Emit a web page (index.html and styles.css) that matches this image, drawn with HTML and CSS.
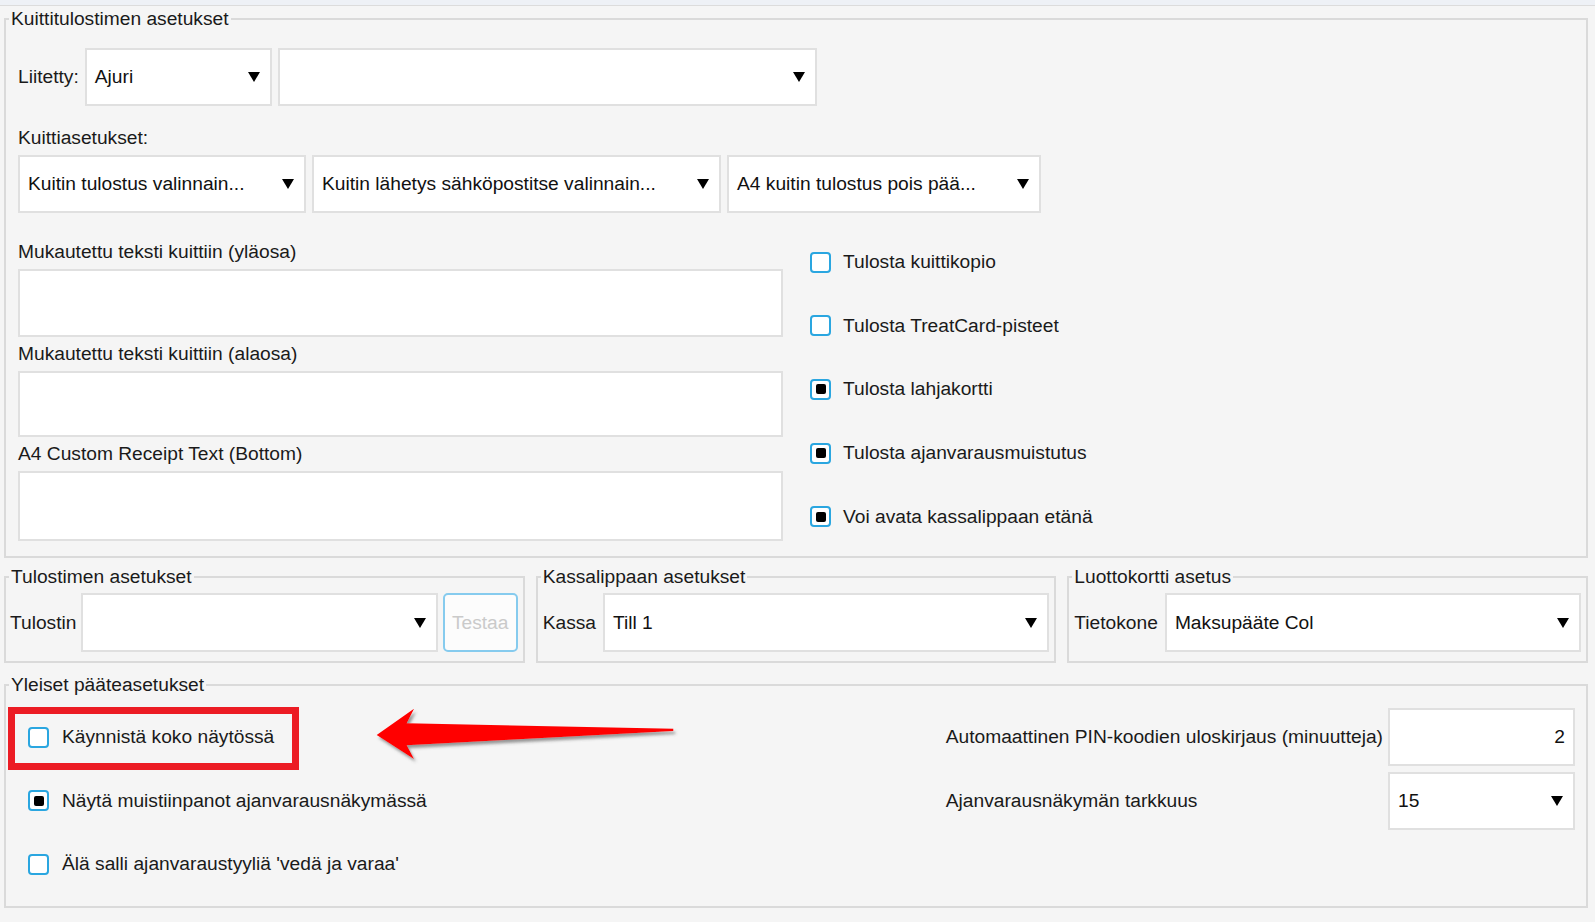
FILE: index.html
```html
<!DOCTYPE html>
<html lang="fi">
<head>
<meta charset="utf-8">
<title>Asetukset</title>
<link rel="stylesheet" href="styles.css">
</head>
<body>
<div class="topbar"></div>
<div class="page">
  <fieldset class="group">
    <legend>Kuittitulostimen asetukset</legend>
    <div class="fs1-body">
      <div class="row-attach">
        <span class="lbl">Liitetty:</span>
        <div class="select w-ajuri"><span>Ajuri</span><i class="arrow"></i></div>
        <div class="select w-driver"><span></span><i class="arrow"></i></div>
      </div>
      <div class="lbl sec">Kuittiasetukset:</div>
      <div class="row-opts">
        <div class="select w-o1"><span>Kuitin tulostus valinnain...</span><i class="arrow"></i></div>
        <div class="select w-o2"><span>Kuitin lähetys sähköpostitse valinnain...</span><i class="arrow"></i></div>
        <div class="select w-o3"><span>A4 kuitin tulostus pois pää...</span><i class="arrow"></i></div>
      </div>
      <div class="cols">
        <div class="texts">
          <div class="lbl">Mukautettu teksti kuittiin (yläosa)</div>
          <div class="ta ta1"></div>
          <div class="lbl after">Mukautettu teksti kuittiin (alaosa)</div>
          <div class="ta ta2"></div>
          <div class="lbl after">A4 Custom Receipt Text (Bottom)</div>
          <div class="ta ta3"></div>
        </div>
        <div class="checks">
          <div class="check"><span class="cb"></span><span>Tulosta kuittikopio</span></div>
          <div class="check"><span class="cb"></span><span>Tulosta TreatCard-pisteet</span></div>
          <div class="check"><span class="cb on"></span><span>Tulosta lahjakortti</span></div>
          <div class="check"><span class="cb on"></span><span>Tulosta ajanvarausmuistutus</span></div>
          <div class="check"><span class="cb on"></span><span>Voi avata kassalippaan etänä</span></div>
        </div>
      </div>
    </div>
  </fieldset>

  <div class="row2">
    <fieldset class="group">
      <legend>Tulostimen asetukset</legend>
      <div class="fs2-body tight">
        <span class="lbl">Tulostin</span>
        <div class="select grow h59"><span></span><i class="arrow"></i></div>
        <div class="btn">Testaa</div>
      </div>
    </fieldset>
    <fieldset class="group">
      <legend>Kassalippaan asetukset</legend>
      <div class="fs2-body">
        <span class="lbl">Kassa</span>
        <div class="select grow h59"><span>Till 1</span><i class="arrow"></i></div>
      </div>
    </fieldset>
    <fieldset class="group">
      <legend>Luottokortti asetus</legend>
      <div class="fs2-body">
        <span class="lbl">Tietokone</span>
        <div class="select grow h59"><span>Maksupääte Col</span><i class="arrow"></i></div>
      </div>
    </fieldset>
  </div>

  <fieldset class="group general">
    <legend>Yleiset pääteasetukset</legend>
    <div class="fs3-body">
      <div class="check gen r1 c1">
        <span class="cb"></span><span>Käynnistä koko näytössä</span>
        <div class="highlight"></div>
        <svg class="pointer" width="310" height="66" viewBox="0 0 310 66">
          <defs>
            <filter id="sh" x="-10%" y="-30%" width="120%" height="160%">
              <feDropShadow dx="2" dy="3" stdDeviation="1.5" flood-color="#555" flood-opacity="0.6"/>
            </filter>
          </defs>
          <polygon filter="url(#sh)" fill="#ff0000" points="6.7,34 44,7.7 36.7,22.3 303.3,27.7 303.3,30 36.7,44.3 44,58"/>
        </svg>
      </div>
      <div class="check gen r2 c1"><span class="cb on"></span><span>Näytä muistiinpanot ajanvarausnäkymässä</span></div>
      <div class="check gen r3 c1"><span class="cb"></span><span>Älä salli ajanvaraustyyliä 'vedä ja varaa'</span></div>
      <span class="lbl r1 c2 mid">Automaattinen PIN-koodien uloskirjaus (minuutteja)</span>
      <div class="input r1 c3">2</div>
      <span class="lbl r2 c2 mid">Ajanvarausnäkymän tarkkuus</span>
      <div class="select r2 c3 h58"><span>15</span><i class="arrow"></i></div>
    </div>
  </fieldset>
</div>
</body>
</html>
```

FILE: styles.css
```css
* { box-sizing: border-box; }

body {
  margin: 0;
  width: 1595px;
  height: 922px;
  overflow: hidden;
  background: #f5f5f5;
  font-family: "Liberation Sans", Arial, sans-serif;
  font-size: 19.2px;
  color: #1a1a1a;
}

.topbar {
  height: 6px;
  background: #eef1f6;
  border-bottom: 1px solid #dcdcdc;
}

.page {
  padding: 2px 7px 0 4px;
}

fieldset.group {
  margin: 0;
  padding: 0;
  min-width: 0;
  border: 2px solid #dadada;
  position: relative;
}

legend {
  margin-left: 3px;
  padding: 0 2px;
  height: 22px;
  line-height: 22px;
  color: #1a1a1a;
}

.lbl {
  line-height: 22px;
  white-space: nowrap;
}

/* Receipt printer group */
.fs1-body {
  padding: 18px 12px 15px 12px;
}

.row-attach {
  display: flex;
  align-items: center;
  gap: 6px;
  height: 58px;
}

.select {
  display: flex;
  align-items: center;
  justify-content: space-between;
  background: #fff;
  border: 2px solid #e0e0e0;
  padding: 0 10px 0 8px;
  height: 58px;
  color: #111;
  white-space: nowrap;
}

.arrow {
  flex: none;
  width: 0;
  height: 0;
  border-left: 6.5px solid transparent;
  border-right: 6.5px solid transparent;
  border-top: 10px solid #000;
}

.w-ajuri { width: 187px; }
.w-driver { width: 539px; }

.sec {
  margin-top: 20.5px;
  height: 22px;
}

.row-opts {
  display: flex;
  gap: 6px;
  margin-top: 6.5px;
}

.w-o1 { width: 288px; }
.w-o2 { width: 409px; }
.w-o3 { width: 314px; }

.cols {
  display: flex;
  margin-top: 28px;
}

.texts {
  width: 765px;
  flex: none;
}

.texts .lbl { height: 22px; }
.texts .lbl.after { margin-top: 6px; }

.ta {
  background: #fff;
  border: 2px solid #e0e0e0;
}

.ta1 { height: 68px; margin-top: 6px; }
.ta2 { height: 66px; margin-top: 6px; }
.ta3 { height: 70px; margin-top: 6px; }

.checks {
  margin-left: 27px;
  padding-top: 10px;
  display: flex;
  flex-direction: column;
  gap: 41.7px;
}

.check {
  display: flex;
  align-items: center;
  gap: 12px;
  height: 22px;
  white-space: nowrap;
}

.cb {
  flex: none;
  width: 21px;
  height: 21px;
  border: 2px solid #2aa6e0;
  border-radius: 4px;
  background: #fff;
  display: flex;
  align-items: center;
  justify-content: center;
}

.cb.on::after {
  content: "";
  width: 10px;
  height: 10px;
  background: #000;
  border-radius: 2px;
}

/* Second row of groups */
.row2 {
  display: grid;
  grid-template-columns: repeat(3, 1fr);
  gap: 11px;
  margin-top: 8px;
}

.fs2-body {
  display: flex;
  align-items: center;
  gap: 7px;
  padding: 5px 5px 9px 5px;
}

.fs2-body.tight {
  gap: 5px;
  padding-left: 4px;
}

.grow { flex: 1; min-width: 0; }
.h59 { height: 59px; }
.h58 { height: 58px; }

.btn {
  flex: none;
  width: 75px;
  height: 59px;
  border: 2px solid #86cbee;
  border-radius: 5px;
  background: #fcfcfc;
  color: #cacaca;
  display: flex;
  align-items: center;
  justify-content: center;
}

/* General terminal settings */
fieldset.group.general { margin-top: 10.5px; }

.fs3-body {
  display: grid;
  grid-template-columns: 1fr auto 187px;
  grid-template-rows: repeat(3, 58px);
  row-gap: 5.7px;
  column-gap: 5px;
  padding: 12.5px 11px 13px 22px;
}

.r1 { grid-row: 1; }
.r2 { grid-row: 2; }
.r3 { grid-row: 3; }
.c1 { grid-column: 1; }
.c2 { grid-column: 2; }
.c3 { grid-column: 3; }

.check.gen {
  height: 58px;
  gap: 13px;
  position: relative;
}

.mid { align-self: center; }

.input {
  background: #fff;
  border: 2px solid #e0e0e0;
  display: flex;
  align-items: center;
  justify-content: flex-end;
  padding-right: 8px;
  color: #111;
}

.highlight {
  position: absolute;
  left: -20px;
  top: -1px;
  width: 291px;
  height: 63px;
  border: 7px solid #ec1c24;
  pointer-events: none;
}

.pointer {
  position: absolute;
  left: 342px;
  top: -7px;
}
```
